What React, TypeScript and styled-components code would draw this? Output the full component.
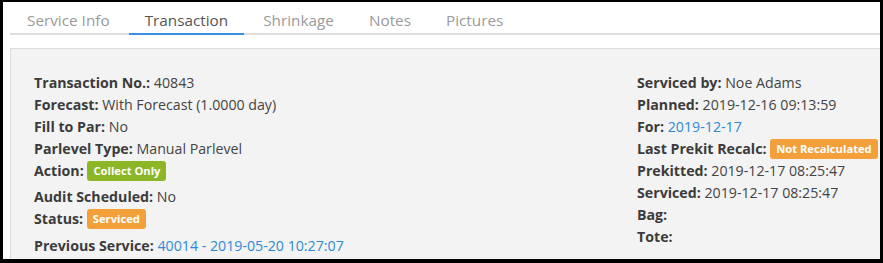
import React from 'react';
import styled, { createGlobalStyle } from 'styled-components';

const GlobalStyle = createGlobalStyle`
  html, body {
    margin: 0;
    padding: 0;
    background: #000;
  }
  body {
    font-family: "Open Sans", "Liberation Sans", sans-serif;
  }
`;

type Field = {
  label: string;
  value?: string;
  link?: boolean;
  badge?: { text: string; tone: 'green' | 'orange' };
  extra?: number;
};

const tabs = ['Service Info', 'Transaction', 'Shrinkage', 'Notes', 'Pictures'];

const leftFields: Field[] = [
  { label: 'Transaction No.:', value: '40843' },
  { label: 'Forecast:', value: 'With Forecast (1.0000 day)' },
  { label: 'Fill to Par:', value: 'No' },
  { label: 'Parlevel Type:', value: 'Manual Parlevel' },
  { label: 'Action:', badge: { text: 'Collect Only', tone: 'green' }, extra: 4 },
  { label: 'Audit Scheduled:', value: 'No' },
  { label: 'Status:', badge: { text: 'Serviced', tone: 'orange' }, extra: 5 },
  { label: 'Previous Service:', value: '40014 - 2019-05-20 10:27:07', link: true },
];

const rightFields: Field[] = [
  { label: 'Serviced by:', value: 'Noe Adams' },
  { label: 'Planned:', value: '2019-12-16 09:13:59' },
  { label: 'For:', value: '2019-12-17', link: true },
  { label: 'Last Prekit Recalc:', badge: { text: 'Not Recalculated', tone: 'orange' } },
  { label: 'Prekitted:', value: '2019-12-17 08:25:47' },
  { label: 'Serviced:', value: '2019-12-17 08:25:47' },
  { label: 'Bag:' },
  { label: 'Tote:' },
];

const FieldList: React.FC<{ fields: Field[] }> = ({ fields }) => (
  <Column>
    {fields.map(f => (
      <Row key={f.label} $extra={f.extra ?? 0}>
        <Label>{f.label}</Label>{' '}
        {f.badge ? (
          <Badge $tone={f.badge.tone}>{f.badge.text}</Badge>
        ) : f.link ? (
          <Link>{f.value}</Link>
        ) : (
          <Value>{f.value}</Value>
        )}
      </Row>
    ))}
  </Column>
);

export default function App() {
  return (
    <>
      <GlobalStyle />
      <Frame>
        <TabBar>
          {tabs.map(t => (
            <Tab key={t} $active={t === 'Transaction'}>{t}</Tab>
          ))}
        </TabBar>
        <Panel>
          <FieldList fields={leftFields} />
          <FieldList fields={rightFields} />
        </Panel>
      </Frame>
    </>
  );
}

const Frame = styled.div`
  width: 883px;
  height: 263px;
  box-sizing: border-box;
  border-style: solid;
  border-color: #000;
  border-width: 2px 3px 4px 3px;
  background: #fff;
  overflow: hidden;
`;

const TabBar = styled.div`
  display: flex;
  gap: 3px;
  margin-left: 7px;
  padding-left: 1px;
  border-bottom: 2px solid #dedede;
`;

const Tab = styled.div<{ $active: boolean }>`
  padding: 8px 16px 3px;
  font-size: 15.3px;
  line-height: 20px;
  color: ${p => (p.$active ? '#555' : '#9a9a9a')};
  border-bottom: 2px solid ${p => (p.$active ? '#3a8ee6' : 'transparent')};
  margin-bottom: -2px;
`;

const Panel = styled.div`
  margin: 13px -4px 0 7px;
  height: 260px;
  box-sizing: border-box;
  padding: 23px 0 0 23px;
  background: #f3f3f3;
  border: 1px solid #dcdcdc;
  display: grid;
  grid-template-columns: 603px 1fr;
`;

const Column = styled.div`
  display: flex;
  flex-direction: column;
`;

const Row = styled.div<{ $extra: number }>`
  height: 22px;
  line-height: 22px;
  font-size: 14.2px;
  white-space: nowrap;
  margin-bottom: ${p => p.$extra}px;
`;

const Label = styled.span`
  font-weight: 700;
  color: #3b3b3b;
`;

const Value = styled.span`
  color: #444;
`;

const Link = styled.span`
  color: #2e8ad6;
`;

const Badge = styled.span<{ $tone: 'green' | 'orange' }>`
  display: inline-block;
  vertical-align: middle;
  margin-top: -2px;
  padding: 0 6px;
  height: 20px;
  line-height: 20px;
  border-radius: 3px;
  font-size: 11.2px;
  font-weight: 700;
  color: #fff;
  background: ${p => (p.$tone === 'green' ? '#8cb625' : '#f4a03a')};
`;
